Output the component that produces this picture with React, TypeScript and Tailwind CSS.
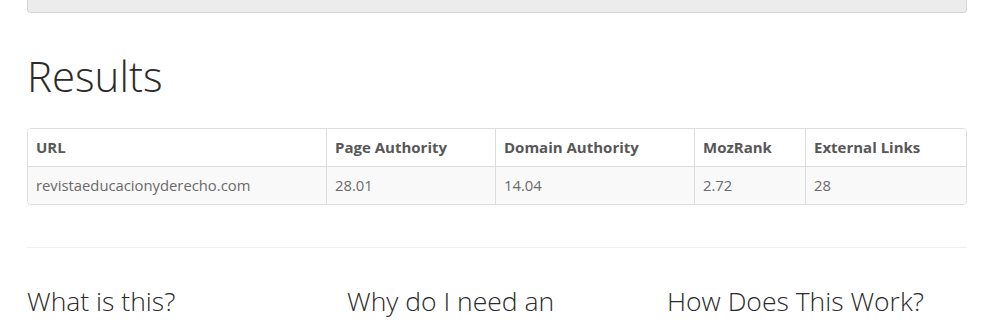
const rows = [
  {
    url: "revistaeducacionyderecho.com",
    pa: "28.01",
    da: "14.04",
    mozRank: "2.72",
    links: "28",
  },
];

const headers = ["URL", "Page Authority", "Domain Authority", "MozRank", "External Links"];

export default function App() {
  return (
    <div className="min-h-screen bg-white font-['Open_Sans',sans-serif] text-[14px] text-[#333]">
      <div className="ml-[27px] w-[940px]">
        {/* bottom of the search panel above */}
        <div className="h-[13px] rounded-b-[4px] border-x border-b border-[#d4d4d4] bg-[#ececec]" />

        <h1 className="mt-[41px] text-[42px] font-light leading-[44px] text-[#2b2b2b]">Results</h1>

        <div className="mt-[30px] overflow-hidden rounded-[4px] border border-[#dddddd]">
          <div className="grid grid-cols-[298px_169px_199px_111px_1fr] border-b border-[#dddddd] bg-white">
            {headers.map((h, i) => (
              <div
                key={h}
                className={`px-2 py-2 text-[15px] font-bold leading-[21px] text-[#575757] ${
                  i > 0 ? "border-l border-[#dddddd]" : ""
                }`}
              >
                {h}
              </div>
            ))}
          </div>
          {rows.map((r) => (
            <div
              key={r.url}
              className="grid grid-cols-[298px_169px_199px_111px_1fr] bg-[#f9f9f9] text-[14.8px] leading-[21px] text-[#6a6a6a]"
            >
              <div className="px-2 py-2">{r.url}</div>
              <div className="border-l border-[#dddddd] px-2 py-2">{r.pa}</div>
              <div className="border-l border-[#dddddd] px-2 py-2">{r.da}</div>
              <div className="border-l border-[#dddddd] px-2 py-2">{r.mozRank}</div>
              <div className="border-l border-[#dddddd] px-2 py-2">{r.links}</div>
            </div>
          ))}
        </div>

        <hr className="mt-[42px] border-t border-[#eeeeee]" />

        <div className="mt-[39px] grid grid-cols-3 gap-[20px]">
          <h3 className="text-[26.5px] font-light leading-[29px] text-[#2b2b2b]">What is this?</h3>
          <h3 className="text-[26.5px] font-light leading-[29px] text-[#2b2b2b]">Why do I need an</h3>
          <h3 className="text-[26.5px] font-light leading-[29px] text-[#2b2b2b]">How Does This Work?</h3>
        </div>
      </div>
    </div>
  );
}
